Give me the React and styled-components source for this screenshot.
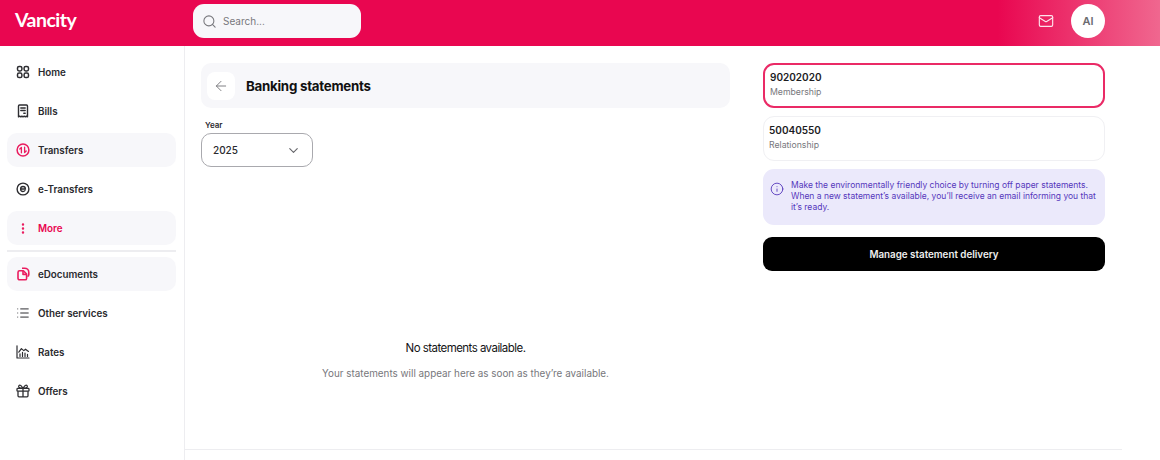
import React from "react";
import styled, { createGlobalStyle } from "styled-components";
import { ArrowLeft, ChevronDown, Search, Mail, List, Info, EllipsisVertical } from "lucide-react";

const GlobalStyle = createGlobalStyle`
  html, body {
    margin: 0;
    padding: 0;
    background: #fff;
    font-family: "Inter", "Liberation Sans", sans-serif;
    color: #1c1c1f;
  }
  * { box-sizing: border-box; }
`;

const Page = styled.div`
  width: 1160px;
  height: 460px;
  overflow: hidden;
  display: flex;
  flex-direction: column;
`;

const Header = styled.header`
  height: 46px;
  flex: none;
  display: flex;
  align-items: center;
  background: linear-gradient(90deg, #e90650 0%, #e90650 86%, #f0678f 100%);
`;

const Logo = styled.div`
  width: 193px;
  padding-left: 15px;
  margin-top: -7px;
  color: #fff;
  font-family: "Lato", sans-serif;
  font-size: 19.5px;
  font-weight: 700;
  letter-spacing: -0.5px;
`;

const SearchBox = styled.div`
  width: 168px;
  height: 34px;
  margin-top: -4px;
  padding-left: 9px;
  display: flex;
  align-items: center;
  gap: 6px;
  background: #f7f7fa;
  border-radius: 11px;
  color: #77777c;
  font-size: 10px;
`;

const HeaderRight = styled.div`
  margin-left: auto;
  padding-right: 55px;
  display: flex;
  align-items: center;
  gap: 17px;
  margin-top: -4px;
`;

const Avatar = styled.div`
  width: 34px;
  height: 34px;
  border-radius: 50%;
  background: #fff;
  color: #6b6b70;
  font-size: 11px;
  font-weight: 600;
  display: flex;
  align-items: center;
  justify-content: center;
`;

const Body = styled.div`
  flex: 1;
  display: flex;
  min-height: 0;
`;

const Sidebar = styled.nav`
  width: 185px;
  flex: none;
  padding: 9px 8px 0 7px;
  border-right: 1px solid #ededf0;
  display: flex;
  flex-direction: column;
  gap: 5px;
`;

const NavItem = styled.div`
  height: 34px;
  padding-left: 9px;
  display: flex;
  align-items: center;
  gap: 8px;
  border-radius: 10px;
  font-size: 9.8px;
  font-weight: 600;
  background: ${(p) => (p.$shaded ? "#f7f7fa" : "transparent")};
  color: ${(p) => (p.$accent ? "#e90650" : "#2a2a2e")};
`;

const NavIcon = styled.span`
  width: 14px;
  height: 14px;
  flex: none;
  display: flex;
  align-items: center;
  justify-content: center;
  color: ${(p) => (p.$pink ? "#ea1c5f" : "#2e2e32")};
`;

const Divider = styled.div`
  height: 2px;
  background: #ededf0;
`;

const Content = styled.div`
  width: 937px;
  height: 404px;
  flex: none;
  border-bottom: 1px solid #ededf0;
  padding: 17px 17px 0 16px;
  display: flex;
  gap: 33px;
  align-items: flex-start;
`;

const MainColumn = styled.main`
  width: 529px;
  flex: none;
`;

const TitleBar = styled.div`
  height: 45px;
  padding-left: 6px;
  display: flex;
  align-items: center;
  gap: 11px;
  background: #f7f7fa;
  border-radius: 10px;
`;

const BackButton = styled.div`
  width: 28px;
  height: 28px;
  border-radius: 8px;
  background: #fff;
  color: #77777c;
  display: flex;
  align-items: center;
  justify-content: center;
`;

const Title = styled.h1`
  margin: 0;
  font-size: 13.3px;
  font-weight: 700;
  letter-spacing: -0.25px;
  color: #111;
`;

const YearLabel = styled.div`
  margin-top: 11px;
  height: 14px;
  line-height: 12px;
  padding-left: 4px;
  font-size: 8px;
  font-weight: 600;
  color: #2a2a2e;
`;

const SelectBox = styled.div`
  width: 112px;
  height: 34px;
  padding: 0 11px 0 11px;
  display: flex;
  align-items: center;
  justify-content: space-between;
  border: 1px solid #a9a9ae;
  border-radius: 10px;
  font-size: 10px;
  font-weight: 500;
  color: #2a2a2e;
`;

const EmptyState = styled.div`
  margin-top: 174px;
  display: flex;
  flex-direction: column;
  align-items: center;
  gap: 12px;
`;

const EmptyTitle = styled.div`
  font-size: 11.5px;
  font-weight: 400;
  line-height: 14px;
  letter-spacing: -0.55px;
  color: #141416;
`;

const EmptyText = styled.div`
  font-size: 9.9px;
  line-height: 13px;
  color: #77777c;
`;

const SideColumn = styled.aside`
  width: 342px;
  flex: none;
  display: flex;
  flex-direction: column;
  gap: 8px;
`;

const AccountCard = styled.div`
  height: 45px;
  padding: 0 5px 3px;
  display: flex;
  flex-direction: column;
  justify-content: center;
  gap: 3px;
  border-radius: 11px;
  border: ${(p) => (p.$selected ? "2px solid #ea2a66" : "1px solid #f0f0f3")};
`;

const AccountNumber = styled.div`
  font-size: 10px;
  font-weight: 600;
  line-height: 13px;
  color: #1c1c1f;
`;

const AccountType = styled.div`
  font-size: 8.7px;
  line-height: 11px;
  color: #77777c;
`;

const InfoBox = styled.div`
  height: 56px;
  padding: 11px 8px 0 7px;
  display: flex;
  gap: 7px;
  background: #ebe9fb;
  border-radius: 11px;
  color: #5537bb;
  font-size: 8.5px;
  line-height: 11.2px;
`;

const InfoIconWrap = styled.span`
  flex: none;
  margin-top: 2px;
  display: flex;
`;

const ManageButton = styled.button`
  height: 34px;
  margin-top: 4px;
  border: none;
  border-radius: 9px;
  background: #000;
  color: #eee;
  font-family: inherit;
  font-size: 9.8px;
  font-weight: 600;
`;

const HomeIcon = () => (
  <svg width="14" height="14" viewBox="0 0 14 14" fill="none" stroke="currentColor" strokeWidth="1.5">
    <rect x="1.5" y="1.5" width="4.4" height="4.4" rx="1.6" />
    <rect x="8.1" y="1.5" width="4.4" height="4.4" rx="1.6" />
    <rect x="1.5" y="8.1" width="4.4" height="4.4" rx="1.6" />
    <rect x="8.1" y="8.1" width="4.4" height="4.4" rx="1.6" />
  </svg>
);

const BillIcon = () => (
  <svg width="14" height="14" viewBox="0 0 14 14" fill="none" stroke="currentColor" strokeWidth="1.4">
    <path d="M2.500 12.800V2c0-.6.400-1 1-1h7c.6 0 1 .4 1 1v10.800l-1.100-.7-1.100.7-1.100-.7-1.200.7-1.100-.7-1.100.7-1.100-.7z" strokeLinejoin="round" />
    <path d="M4.800 4h4.400M4.800 6.500h4.400M7.800 9.200h1.400" strokeLinecap="round" />
  </svg>
);

const TransferIcon = () => (
  <svg width="14" height="14" viewBox="0 0 14 14" fill="none" stroke="currentColor" strokeWidth="1.5" strokeLinecap="round" strokeLinejoin="round">
    <circle cx="7" cy="7" r="5.900" />
    <path d="M5.400 9.800V4.400L3.800 6M8.600 4.200v5.400L10.200 8" strokeWidth="1.300" />
  </svg>
);

const ETransferIcon = () => (
  <svg width="14" height="14" viewBox="0 0 14 14" fill="none" stroke="currentColor" strokeLinecap="round">
    <circle cx="7" cy="7" r="5.900" strokeWidth="1.400" />
    <path d="M4.600 7h4.800c0-1.400-1-2.500-2.400-2.500S4.600 5.600 4.600 7s1 2.500 2.400 2.500c.9 0 1.600-.4 2-1" strokeWidth="1.300" />
  </svg>
);

const DocsIcon = () => (
  <svg width="14" height="14" viewBox="0 0 14 14" fill="none" stroke="currentColor" strokeWidth="1.600" strokeLinejoin="round">
    <path d="M6 1.200h2.600c2.300 0 4.200 1.900 4.200 4.200v2.400c0 .8-.6 1.400-1.400 1.400" />
    <path d="M3.600 3.800h3.800l3.200 3.200v4.400c0 .8-.6 1.400-1.400 1.400H3.600c-.9 0-1.600-.7-1.600-1.600V5.400c0-.9.700-1.600 1.600-1.600z" />
    <path d="M7 4v3.400h3.400" />
  </svg>
);

const RatesIcon = () => (
  <svg width="14" height="14" viewBox="0 0 14 14" fill="none" stroke="currentColor" strokeWidth="1.200" strokeLinecap="round" strokeLinejoin="round">
    <path d="M1 .8V13h12" />
    <path d="M2.800 7.200L5.400 3.600l2.400 2 1.700-1.400 3 2.200" />
    <path d="M4 11.500V8.800M6.500 11.500V7.400M9 11.500V8M11.500 11.500V9.400" />
  </svg>
);

const GiftIcon = () => (
  <svg width="14" height="14" viewBox="0 0 14 14" fill="none" stroke="currentColor" strokeWidth="1.300" strokeLinejoin="round">
    <rect x="1" y="4.400" width="12" height="2.800" rx=".8" />
    <path d="M2 7.200v4.600c0 .6.400 1 1 1h8c.6 0 1-.4 1-1V7.200M7 4.400v8.400" />
    <path d="M7 4.400C6 2.600 5.200 1.200 4 1.200 2.900 1.200 2.500 2 2.800 3c.3.900 1.400 1.400 4.200 1.400zM7 4.400c1-1.800 1.800-3.200 3-3.200 1.100 0 1.500.8 1.200 1.800-.3.900-1.400 1.400-4.200 1.400z" />
  </svg>
);

export default function App() {
  return (
    <Page>
      <GlobalStyle />
      <Header>
        <Logo>Vancity</Logo>
        <SearchBox>
          <Search size={15} strokeWidth={1.7} />
          Search...
        </SearchBox>
        <HeaderRight>
          <Mail size={16} strokeWidth={1.7} color="#fde3ec" />
          <Avatar>AI</Avatar>
        </HeaderRight>
      </Header>
      <Body>
        <Sidebar>
          <NavItem><NavIcon><HomeIcon /></NavIcon>Home</NavItem>
          <NavItem><NavIcon><BillIcon /></NavIcon>Bills</NavItem>
          <NavItem $shaded><NavIcon $pink><TransferIcon /></NavIcon>Transfers</NavItem>
          <NavItem><NavIcon><ETransferIcon /></NavIcon>e-Transfers</NavItem>
          <NavItem $shaded $accent><NavIcon $pink><EllipsisVertical size={15} strokeWidth={2.2} /></NavIcon>More</NavItem>
          <Divider />
          <NavItem $shaded><NavIcon $pink><DocsIcon /></NavIcon>eDocuments</NavItem>
          <NavItem><NavIcon><List size={14} strokeWidth={1.7} /></NavIcon>Other services</NavItem>
          <NavItem><NavIcon><RatesIcon /></NavIcon>Rates</NavItem>
          <NavItem><NavIcon><GiftIcon /></NavIcon>Offers</NavItem>
        </Sidebar>
        <Content>
          <MainColumn>
            <TitleBar>
              <BackButton><ArrowLeft size={16} strokeWidth={1.4} /></BackButton>
              <Title>Banking statements</Title>
            </TitleBar>
            <YearLabel>Year</YearLabel>
            <SelectBox>
              2025
              <ChevronDown size={15} strokeWidth={1.8} color="#66666b" />
            </SelectBox>
            <EmptyState>
              <EmptyTitle>No statements available.</EmptyTitle>
              <EmptyText>Your statements will appear here as soon as they’re available.</EmptyText>
            </EmptyState>
          </MainColumn>
          <SideColumn>
            <AccountCard $selected>
              <AccountNumber>90202020</AccountNumber>
              <AccountType>Membership</AccountType>
            </AccountCard>
            <AccountCard>
              <AccountNumber>50040550</AccountNumber>
              <AccountType>Relationship</AccountType>
            </AccountCard>
            <InfoBox>
              <InfoIconWrap><Info size={14} strokeWidth={1.5} /></InfoIconWrap>
              <div>
                Make the environmentally friendly choice by turning off paper statements. When a new statement’s available, you’ll receive an email informing you that it’s ready.
              </div>
            </InfoBox>
            <ManageButton>Manage statement delivery</ManageButton>
          </SideColumn>
        </Content>
      </Body>
    </Page>
  );
}
